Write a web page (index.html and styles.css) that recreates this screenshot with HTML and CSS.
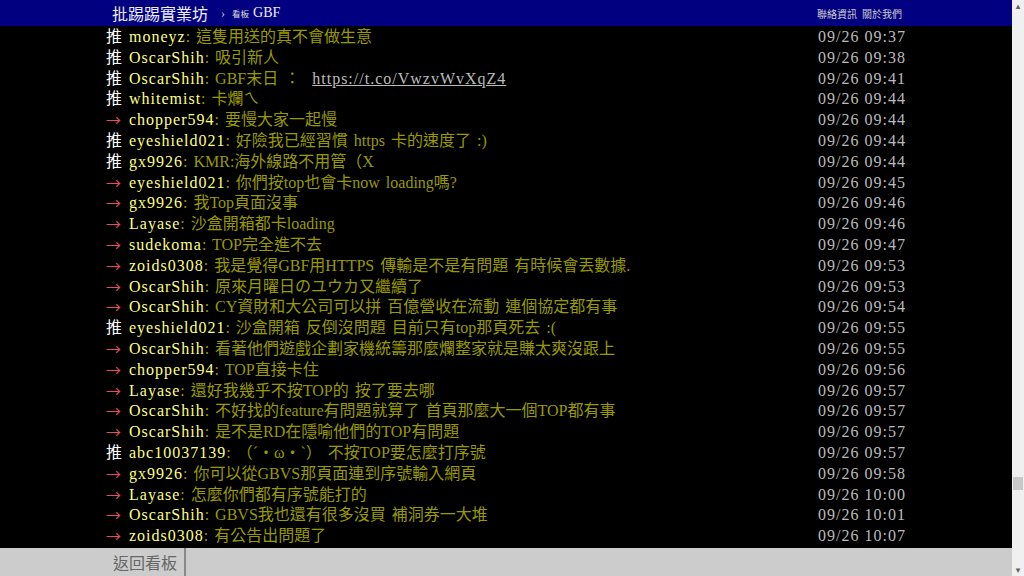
FILE: index.html
```html
<!DOCTYPE html>
<html lang="zh-Hant">
<head>
    <meta charset="utf-8">
    <title>批踢踢實業坊 › 看板 GBF</title>
    <link rel="stylesheet" href="styles.css">
</head>
<body>
<div class="page">
    <div class="main">

        <div class="topbar">
            <div class="topbarInner">
                <span class="logo">批踢踢實業坊</span>
                <span class="sep">›</span>
                <span class="boardLabel">看板</span>
                <span class="boardName">GBF</span>
                <span class="topLinks">聯絡資訊&nbsp;&nbsp;關於我們</span>
            </div>
        </div>

        <div class="content">
            <div class="push"><span class="tag">推</span><span class="userid">moneyz</span><span class="text">: 這隻用送的真不會做生意</span><span class="date">09/26 09:37</span></div>
            <div class="push"><span class="tag">推</span><span class="userid">OscarShih</span><span class="text">: 吸引新人</span><span class="date">09/26 09:38</span></div>
            <div class="push"><span class="tag">推</span><span class="userid">OscarShih</span><span class="text">: GBF末日 ：&nbsp;&nbsp;<span class="link">https://t.co/VwzvWvXqZ4</span></span><span class="date">09/26 09:41</span></div>
            <div class="push"><span class="tag">推</span><span class="userid">whitemist</span><span class="text">: 卡爛ㄟ</span><span class="date">09/26 09:44</span></div>
            <div class="push"><span class="tag arrow">→</span><span class="userid">chopper594</span><span class="text">: 要慢大家一起慢</span><span class="date">09/26 09:44</span></div>
            <div class="push"><span class="tag">推</span><span class="userid">eyeshield021</span><span class="text">: 好險我已經習慣 https 卡的速度了 :)</span><span class="date">09/26 09:44</span></div>
            <div class="push"><span class="tag">推</span><span class="userid">gx9926</span><span class="text">: KMR:海外線路不用管（X</span><span class="date">09/26 09:44</span></div>
            <div class="push"><span class="tag arrow">→</span><span class="userid">eyeshield021</span><span class="text">: 你們按top也會卡now loading嗎?</span><span class="date">09/26 09:45</span></div>
            <div class="push"><span class="tag arrow">→</span><span class="userid">gx9926</span><span class="text">: 我Top頁面沒事</span><span class="date">09/26 09:46</span></div>
            <div class="push"><span class="tag arrow">→</span><span class="userid">Layase</span><span class="text">: 沙盒開箱都卡loading</span><span class="date">09/26 09:46</span></div>
            <div class="push"><span class="tag arrow">→</span><span class="userid">sudekoma</span><span class="text">: TOP完全進不去</span><span class="date">09/26 09:47</span></div>
            <div class="push"><span class="tag arrow">→</span><span class="userid">zoids0308</span><span class="text">: 我是覺得GBF用HTTPS 傳輸是不是有問題 有時候會丟數據.</span><span class="date">09/26 09:53</span></div>
            <div class="push"><span class="tag arrow">→</span><span class="userid">OscarShih</span><span class="text">: 原來月曜日のユウカ又繼續了</span><span class="date">09/26 09:53</span></div>
            <div class="push"><span class="tag arrow">→</span><span class="userid">OscarShih</span><span class="text">: CY資財和大公司可以拼 百億營收在流動 連個協定都有事</span><span class="date">09/26 09:54</span></div>
            <div class="push"><span class="tag">推</span><span class="userid">eyeshield021</span><span class="text">: 沙盒開箱 反倒沒問題 目前只有top那頁死去 :(</span><span class="date">09/26 09:55</span></div>
            <div class="push"><span class="tag arrow">→</span><span class="userid">OscarShih</span><span class="text">: 看著他們遊戲企劃家機統籌那麼爛整家就是賺太爽沒跟上</span><span class="date">09/26 09:55</span></div>
            <div class="push"><span class="tag arrow">→</span><span class="userid">chopper594</span><span class="text">: TOP直接卡住</span><span class="date">09/26 09:56</span></div>
            <div class="push"><span class="tag arrow">→</span><span class="userid">Layase</span><span class="text">: 還好我幾乎不按TOP的 按了要去哪</span><span class="date">09/26 09:57</span></div>
            <div class="push"><span class="tag arrow">→</span><span class="userid">OscarShih</span><span class="text">: 不好找的feature有問題就算了 首頁那麼大一個TOP都有事</span><span class="date">09/26 09:57</span></div>
            <div class="push"><span class="tag arrow">→</span><span class="userid">OscarShih</span><span class="text">: 是不是RD在隱喻他們的TOP有問題</span><span class="date">09/26 09:57</span></div>
            <div class="push"><span class="tag">推</span><span class="userid">abc10037139</span><span class="text">: （ˊ・ω・ˋ） 不按TOP要怎麼打序號</span><span class="date">09/26 09:57</span></div>
            <div class="push"><span class="tag arrow">→</span><span class="userid">gx9926</span><span class="text">: 你可以從GBVS那頁面連到序號輸入網頁</span><span class="date">09/26 09:58</span></div>
            <div class="push"><span class="tag arrow">→</span><span class="userid">Layase</span><span class="text">: 怎麼你們都有序號能打的</span><span class="date">09/26 10:00</span></div>
            <div class="push"><span class="tag arrow">→</span><span class="userid">OscarShih</span><span class="text">: GBVS我也還有很多沒買 補洞券一大堆</span><span class="date">09/26 10:01</span></div>
            <div class="push"><span class="tag arrow">→</span><span class="userid">zoids0308</span><span class="text">: 有公告出問題了</span><span class="date">09/26 10:07</span></div>
        </div>

        <div class="footer">
            <div class="footerInner">
                <span class="backBtn">返回看板</span>
            </div>
        </div>

    </div>

    <div class="scrollbar">
        <div class="scrollArrow">▴</div>
        <div class="scrollTrack"><div class="scrollThumb"></div></div>
        <div class="scrollArrow">▾</div>
    </div>
</div>
</body>
</html>
```

FILE: styles.css
```css
html, body
{
    margin:           0;
    padding:          0;
    height:           100%;
    overflow:         hidden;
    background-color: #000;
}

.page
{
    display:          flex;
    height:           576px;
}

.main
{
    flex:             1;
    display:          flex;
    flex-direction:   column;
    background-color: #000;
}

/* Top bar */
.topbar
{
    height:           26px;
    background-color: #000080;
}

.topbarInner
{
    width:            800px;
    margin:           0 auto;
    height:           26px;
    display:          flex;
    align-items:      center;
    padding-left:     6px;
    padding-right:    4px;
    box-sizing:       border-box;
    font-family:      "Liberation Serif", "Noto Sans CJK TC", serif;
    color:            #ddd;
}

.logo
{
    font-size:        16px;
    color:            #eee;
}

.sep
{
    font-size:        12px;
    margin-left:      13px;
    color:            #ccc;
}

.boardLabel
{
    font-size:        8.5px;
    margin-left:      7px;
    color:            #ddd;
}

.boardName
{
    font-size:        14px;
    margin-left:      4px;
    color:            #eee;
}

.topLinks
{
    margin-left:      auto;
    font-size:        10px;
    color:            #ccc;
}

/* Push lines */
.content
{
    flex:             1;
    width:            800px;
    margin:           0 auto;
    padding-top:      1px;
    font-family:      "Liberation Serif", "Noto Sans CJK TC", serif;
    font-size:        16px;
    line-height:      20.8px;
}

.push
{
    display:          flex;
    height:           20.8px;
    white-space:      pre;
}

.tag
{
    width:            23px;
    flex:             none;
    color:            #fff;
}

.arrow
{
    font-family:      "Noto Sans CJK TC", sans-serif;
    font-size:        15px;
    color:            #e05060;
}

.userid
{
    color:            #ffff80;
    letter-spacing:   1px;
}

.text
{
    color:            #999900;
    word-spacing:     2px;
}

.link
{
    color:            #bbb;
    text-decoration:  underline;
    letter-spacing:   1px;
    word-spacing:     0;
}

.date
{
    margin-left:      auto;
    color:            #bbb;
    letter-spacing:   1px;
}

/* Bottom bar */
.footer
{
    height:           28px;
    background-color: #ccc;
}

.footerInner
{
    width:            800px;
    margin:           0 auto;
    height:           28px;
    display:          flex;
}

.backBtn
{
    display:          flex;
    align-items:      center;
    padding:          0 7px;
    border-right:     2px solid #888;
    font-family:      "Noto Sans CJK TC", sans-serif;
    font-size:        16px;
    color:            #666;
}

/* Fake window scrollbar */
.scrollbar
{
    width:            12px;
    display:          flex;
    flex-direction:   column;
    background-color: #f0f0f0;
}

.scrollArrow
{
    height:           12px;
    font-family:      "DejaVu Sans", sans-serif;
    font-size:        9px;
    line-height:      12px;
    text-align:       center;
    color:            #606060;
}

.scrollTrack
{
    flex:             1;
}

.scrollThumb
{
    margin-top:       465px;
    margin-left:      1px;
    width:            10px;
    height:           13px;
    background-color: #c8c8c8;
}
```
